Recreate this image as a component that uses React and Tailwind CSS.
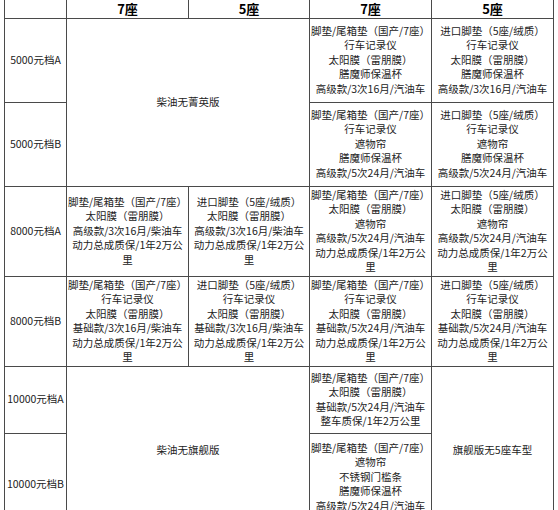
import React from "react";

const L = ({ lines }) => (
  <div className="flex flex-col items-center">
    {lines.map((t, i) => (
      <div key={i} className="whitespace-nowrap">
        {t}
      </div>
    ))}
  </div>
);

const td = "border border-[#4a4a4a] p-0 text-center align-middle";

export default function App() {
  return (
    <div
      className="w-[558px] h-[510px] overflow-hidden bg-white text-[#222222] text-[10.5px] leading-[14.5px]"
      style={{ fontFamily: '"Noto Sans CJK SC", "Noto Sans", sans-serif' }}
    >
      <table className="ml-[4px] border-collapse table-fixed w-[550px]">
        <colgroup>
          <col className="w-[62px]" />
          <col className="w-[122px]" />
          <col className="w-[121px]" />
          <col className="w-[122px]" />
          <col className="w-[122px]" />
        </colgroup>
        <tbody>
          <tr className="h-[18px]">
            <td className={td + " border-t-0"}></td>
            <td className={td + " border-t-0 text-[13px] font-bold text-black leading-[16px]"}>7座</td>
            <td className={td + " border-t-0 text-[13px] font-bold text-black leading-[16px]"}>5座</td>
            <td className={td + " border-t-0 text-[13px] font-bold text-black leading-[16px]"}>7座</td>
            <td className={td + " border-t-0 text-[13px] font-bold text-black leading-[16px]"}>5座</td>
          </tr>
          <tr className="h-[84px]">
            <td className={td}>5000元档A</td>
            <td className={td} colSpan={2} rowSpan={2}>柴油无菁英版</td>
            <td className={td}>
              <L lines={["脚垫/尾箱垫（国产/7座）", "行车记录仪", "太阳膜（雷朋膜）", "膳魔师保温杯", "高级款/3次16月/汽油车"]} />
            </td>
            <td className={td}>
              <L lines={["进口脚垫（5座/绒质）", "行车记录仪", "太阳膜（雷朋膜）", "膳魔师保温杯", "高级款/3次16月/汽油车"]} />
            </td>
          </tr>
          <tr className="h-[84px]">
            <td className={td}>5000元档B</td>
            <td className={td}>
              <L lines={["脚垫/尾箱垫（国产/7座）", "行车记录仪", "遮物帘", "膳魔师保温杯", "高级款/5次24月/汽油车"]} />
            </td>
            <td className={td}>
              <L lines={["进口脚垫（5座/绒质）", "行车记录仪", "遮物帘", "膳魔师保温杯", "高级款/5次24月/汽油车"]} />
            </td>
          </tr>
          <tr className="h-[90px]">
            <td className={td}>8000元档A</td>
            <td className={td}>
              <L lines={["脚垫/尾箱垫（国产/7座）", "太阳膜（雷朋膜）", "高级款/3次16月/柴油车", "动力总成质保/1年2万公", "里"]} />
            </td>
            <td className={td}>
              <L lines={["进口脚垫（5座/绒质）", "太阳膜（雷朋膜）", "高级款/3次16月/柴油车", "动力总成质保/1年2万公", "里"]} />
            </td>
            <td className={td}>
              <L lines={["脚垫/尾箱垫（国产/7座）", "太阳膜（雷朋膜）", "遮物帘", "高级款/5次24月/汽油车", "动力总成质保/1年2万公", "里"]} />
            </td>
            <td className={td}>
              <L lines={["进口脚垫（5座/绒质）", "太阳膜（雷朋膜）", "遮物帘", "高级款/5次24月/汽油车", "动力总成质保/1年2万公", "里"]} />
            </td>
          </tr>
          <tr className="h-[90px]">
            <td className={td}>8000元档B</td>
            <td className={td}>
              <L lines={["脚垫/尾箱垫（国产/7座）", "行车记录仪", "太阳膜（雷朋膜）", "基础款/3次16月/柴油车", "动力总成质保/1年2万公", "里"]} />
            </td>
            <td className={td}>
              <L lines={["进口脚垫（5座/绒质）", "行车记录仪", "太阳膜（雷朋膜）", "基础款/3次16月/柴油车", "动力总成质保/1年2万公", "里"]} />
            </td>
            <td className={td}>
              <L lines={["脚垫/尾箱垫（国产/7座）", "行车记录仪", "太阳膜（雷朋膜）", "基础款/5次24月/汽油车", "动力总成质保/1年2万公", "里"]} />
            </td>
            <td className={td}>
              <L lines={["进口脚垫（5座/绒质）", "行车记录仪", "太阳膜（雷朋膜）", "基础款/5次24月/汽油车", "动力总成质保/1年2万公", "里"]} />
            </td>
          </tr>
          <tr className="h-[67px]">
            <td className={td}>10000元档A</td>
            <td className={td} colSpan={2} rowSpan={2}>柴油无旗舰版</td>
            <td className={td}>
              <L lines={["脚垫/尾箱垫（国产/7座）", "太阳膜（雷朋膜）", "基础款/5次24月/汽油车", "整车质保/1年2万公里"]} />
            </td>
            <td className={td} rowSpan={2}>旗舰版无5座车型</td>
          </tr>
          <tr className="h-[102px]">
            <td className={td}>10000元档B</td>
            <td className={td + " align-top pt-[7px]"}>
              <L lines={["脚垫/尾箱垫（国产/7座）", "遮物帘", "不锈钢门槛条", "膳魔师保温杯", "高级款/5次24月/汽油车", "动力总成质保/1年2万公里"]} />
            </td>
          </tr>
        </tbody>
      </table>
    </div>
  );
}
